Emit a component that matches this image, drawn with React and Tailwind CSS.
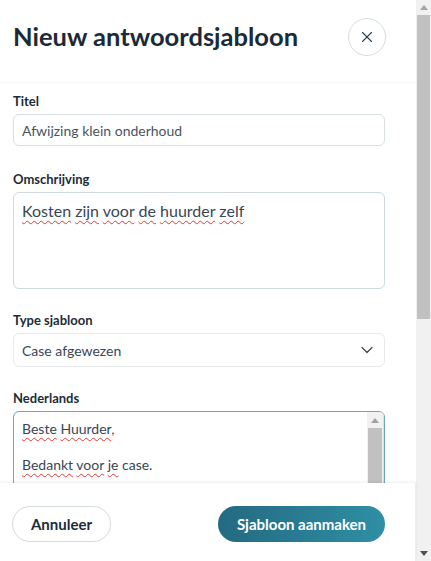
import React from "react";
import { X, ChevronDown } from "lucide-react";

const Squiggle = ({ children }) => (
  <span className="underline decoration-wavy decoration-[#e53935] decoration-1 underline-offset-[3px]">
    {children}
  </span>
);

const Label = ({ children }) => (
  <div className="mb-[3px] text-[13px] font-bold leading-[20px] text-[#1e2b38]">
    {children}
  </div>
);

const ArrowUp = () => (
  <svg width="8" height="5" viewBox="0 0 8 5">
    <path d="M4 0 L8 5 L0 5 Z" fill="#a3a3a3" />
  </svg>
);

const ArrowDown = () => (
  <svg width="8" height="5" viewBox="0 0 8 5">
    <path d="M0 0 L8 0 L4 5 Z" fill="#505050" />
  </svg>
);

const App = () => {
  return (
    <div
      className="flex h-[561px] w-full overflow-hidden bg-white text-[#1e2b38]"
      style={{ fontFamily: "Lato, 'Open Sans', sans-serif" }}
    >
      <div className="flex min-w-0 flex-1 flex-col">
        {/* header */}
        <div className="z-10 flex h-[82px] shrink-0 items-center justify-between bg-white pl-[13px] pr-[30px] shadow-[0_1px_1px_rgba(0,0,0,0.03)]">
          <h1 className="pb-[10px] text-[25.5px] font-bold text-[#1b2a39]">
            Nieuw antwoordsjabloon
          </h1>
          <button className="mb-[8px] flex h-[38px] w-[38px] items-center justify-center rounded-full border border-[#d5dfe2] text-[#2c3e50]">
            <X size={18} strokeWidth={1.5} />
          </button>
        </div>

        {/* form */}
        <div className="min-h-0 flex-1 overflow-hidden">
          <div className="flex flex-col gap-[21px] pl-[13px] pr-[31px] pt-[9px]">
            <div className="mb-[2px]">
              <Label>Titel</Label>
              <input
                defaultValue="Afwijzing klein onderhoud"
                className="h-[32px] w-full rounded-[6px] border border-[#d7dfe2] px-[8px] text-[14px] text-[#4a5562] outline-none"
              />
            </div>

            <div>
              <Label>Omschrijving</Label>
              <div className="h-[97px] w-full rounded-[6px] border border-[#cfd9dd] px-[8px] pt-[6px] text-[16px] leading-[24px] text-[#3a4655]">
                <Squiggle>Kosten</Squiggle> <Squiggle>zijn</Squiggle>{" "}
                <Squiggle>voor</Squiggle> <Squiggle>de</Squiggle>{" "}
                <Squiggle>huurder</Squiggle> <Squiggle>zelf</Squiggle>
              </div>
            </div>

            <div>
              <Label>Type sjabloon</Label>
              <div className="flex h-[34px] w-full items-center justify-between rounded-[6px] border border-[#e6eaec] pl-[8px] pr-[7px] text-[14px] text-[#3a4655]">
                <span>Case afgewezen</span>
                <ChevronDown size={20} strokeWidth={1.5} className="text-[#3a4a5a]" />
              </div>
            </div>

            <div>
              <Label>Nederlands</Label>
              <div className="flex h-[200px] w-full overflow-hidden rounded-[6px] border border-[#6ea7b7]">
                <div className="min-w-0 flex-1 px-[8px] pt-[8px] text-[14px] leading-[18px] text-[#3a4655]">
                  <p>
                    <Squiggle>Beste</Squiggle> <Squiggle>Huurder</Squiggle>,
                  </p>
                  <p className="h-[18px]"></p>
                  <p>
                    <Squiggle>Bedankt</Squiggle> <Squiggle>voor</Squiggle>{" "}
                    <Squiggle>je</Squiggle> case.
                  </p>
                  <p className="h-[18px]"></p>
                  <p>
                    Helaas moeten wij je case afwijzen. Klein onderhoud aan de
                    woning valt onder de verantwoordelijkheid van de huurder.
                  </p>
                </div>
                {/* textarea scrollbar */}
                <div className="flex w-[17px] shrink-0 flex-col border-r border-[#cfe3ea] bg-[#f1f1f1]">
                  <div className="flex h-[16px] items-center justify-center">
                    <ArrowUp />
                  </div>
                  <div className="mx-[1px] h-[120px] bg-[#c1c1c1]"></div>
                </div>
              </div>
            </div>
          </div>
        </div>

        {/* footer */}
        <div className="z-10 flex h-[78px] shrink-0 items-center justify-between border-r border-[#eceeef] bg-white pl-[12px] pr-[30px] shadow-[0_-1px_3px_rgba(0,0,0,0.07)]">
          <button className="mt-[4px] h-[36px] w-[99px] rounded-full border border-[#d3dadd] text-[15px] font-bold text-[#1e2b3a]">
            Annuleer
          </button>
          <button className="mt-[4px] h-[36px] w-[167px] rounded-full bg-gradient-to-r from-[#236a82] to-[#2f8fa4] text-[15px] font-bold text-white">
            Sjabloon aanmaken
          </button>
        </div>
      </div>

      {/* page scrollbar */}
      <div className="flex w-[15px] shrink-0 flex-col bg-[#f1f1f1]">
        <div className="flex h-[15px] items-center justify-center">
          <ArrowUp />
        </div>
        <div className="mx-[1px] h-[304px] bg-[#c1c1c1]"></div>
        <div className="flex-1"></div>
        <div className="flex h-[15px] items-center justify-center">
          <ArrowDown />
        </div>
      </div>
    </div>
  );
};

export default App;
